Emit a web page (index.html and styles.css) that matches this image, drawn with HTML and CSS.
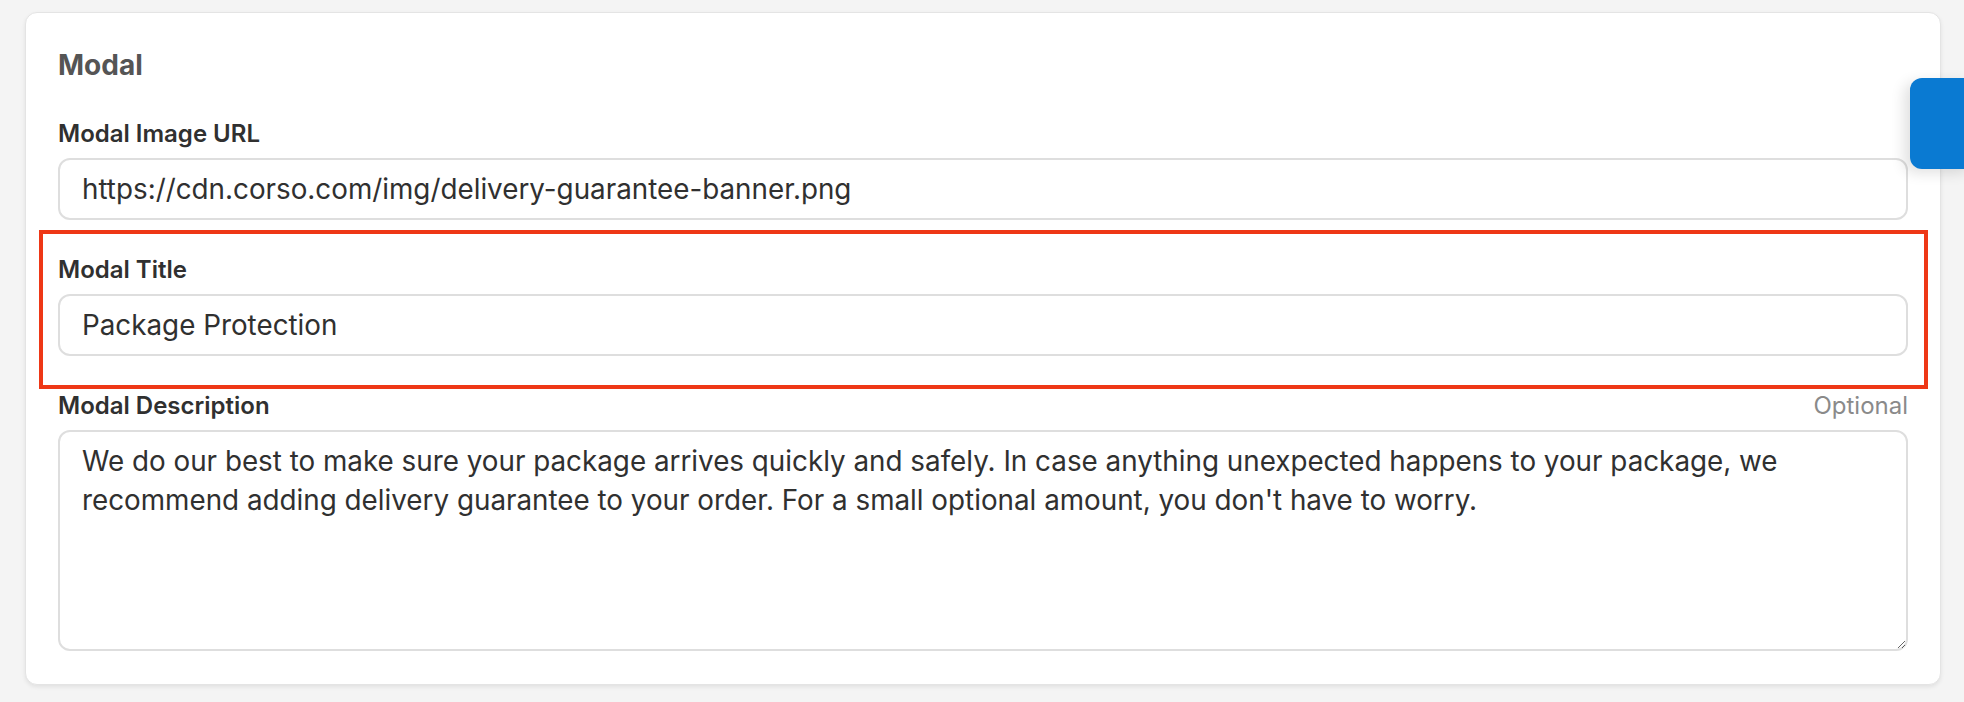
FILE: index.html
```html
<!DOCTYPE html>
<html lang="en">
<head>
  <meta charset="UTF-8">
  <meta name="viewport" content="width=device-width, initial-scale=1.0">
  <title>Modal settings</title>
  <link rel="stylesheet" href="styles.css">
</head>
<body>

  <div class="page">
    <section class="card">
      <h2 class="card-title">Modal</h2>

      <div class="field">
        <label class="field-label" for="modal-image">Modal Image URL</label>
        <input class="text-input" id="modal-image" type="text" value="https://cdn.corso.com/img/delivery-guarantee-banner.png">
      </div>

      <div class="field highlighted">
        <label class="field-label" for="modal-title">Modal Title</label>
        <input class="text-input" id="modal-title" type="text" value="Package Protection">
      </div>

      <div class="field">
        <div class="label-row">
          <label class="field-label" for="modal-description">Modal Description</label>
          <span class="optional">Optional</span>
        </div>
        <textarea class="text-area" id="modal-description">We do our best to make sure your package arrives quickly and safely. In case anything unexpected happens to your package, we recommend adding delivery guarantee to your order. For a small optional amount, you don't have to worry.</textarea>
      </div>
    </section>
  </div>

  <!-- side tab pinned to the window edge -->
  <div class="side-tab"></div>

</body>
</html>
```

FILE: styles.css
```css
/* General Styles */
body {
  margin: 0;
  background: #f4f4f4;
  font-family: 'Inter', 'Noto Sans', sans-serif;
  color: #303030;
}

.page {
  padding: 12px 23px 16px 25px;
}

.card {
  background: #fff;
  border: 1px solid #e4e4e4;
  border-radius: 12px;
  box-shadow: 0 2px 4px rgba(0, 0, 0, 0.08);
  padding: 34px 32px 33px 32px;
  display: flex;
  flex-direction: column;
  gap: 35px;
}

.card-title {
  margin: 0 0 1px;
  font-size: 28px;
  line-height: 36px;
  font-weight: 700;
  color: #555;
}

/* Fields */
.field {
  display: flex;
  flex-direction: column;
  gap: 9px;
}

.field.highlighted {
  position: relative;
}

/* red annotation frame round the title field */
.field.highlighted::after {
  content: '';
  position: absolute;
  top: -25px;
  bottom: -33px;
  left: -19px;
  right: -20px;
  border: 4px solid #ee3716;
  pointer-events: none;
}

.label-row {
  display: flex;
  justify-content: space-between;
  align-items: baseline;
}

.field-label {
  font-size: 24px;
  line-height: 30px;
  font-weight: 600;
  color: #303030;
}

.optional {
  font-size: 24px;
  line-height: 30px;
  color: #8a8a8a;
}

.text-input,
.text-area {
  box-sizing: border-box;
  width: 100%;
  margin: 0;
  border: 2px solid #dedede;
  border-radius: 12px;
  background: #fff;
  font-family: inherit;
  font-size: 27.8px;
  color: #303030;
  padding: 0 22px;
  outline: none;
}

.text-input {
  height: 62px;
}

.text-area {
  height: 221px;
  padding-top: 10px;
  line-height: 39px;
  resize: vertical;
}

/* Side tab */
.side-tab {
  position: fixed;
  top: 78px;
  right: -12px;
  width: 66px;
  height: 91px;
  background: #0a7ad2;
  border-radius: 12px;
  box-shadow: -6px 4px 14px rgba(0, 0, 0, 0.12);
}
```
